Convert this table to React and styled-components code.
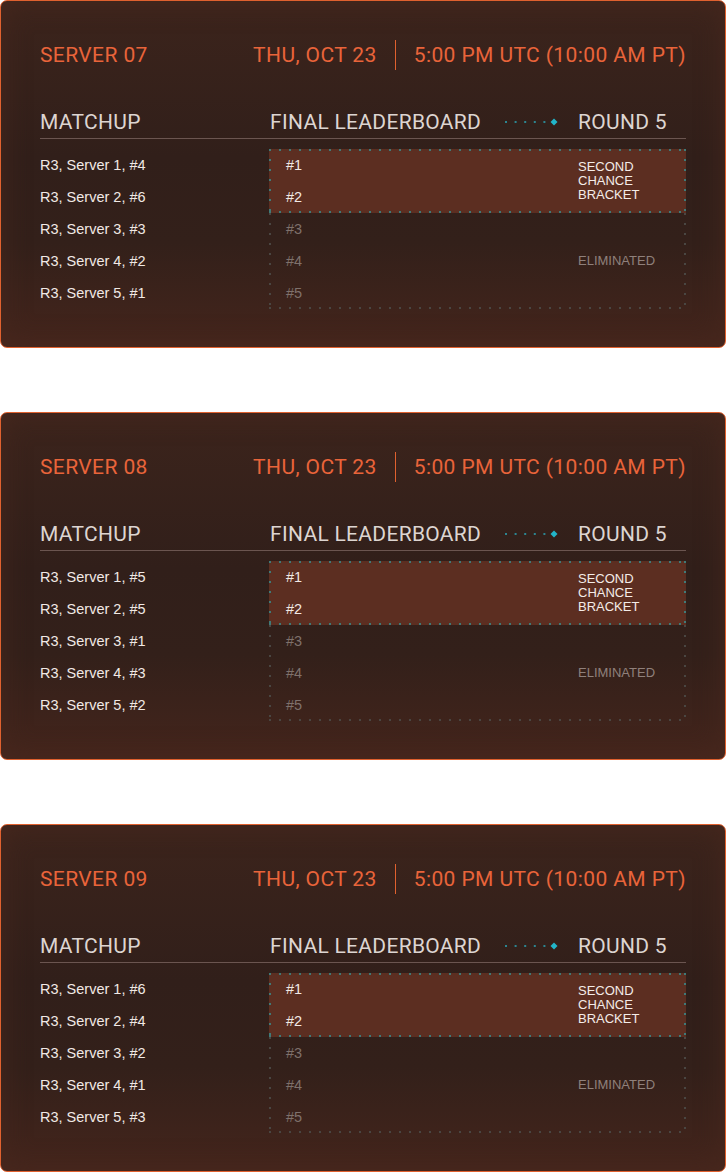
import React from "react";
import styled, { createGlobalStyle } from "styled-components";

const GlobalStyle = createGlobalStyle`
  body {
    margin: 0;
    background: #ffffff;
    font-family: "Liberation Sans", Arial, sans-serif;
  }
`;

const servers = [
  { id: "07", seeds: ["#4", "#6", "#3", "#2", "#1"] },
  { id: "08", seeds: ["#5", "#5", "#1", "#3", "#2"] },
  { id: "09", seeds: ["#6", "#4", "#2", "#1", "#3"] },
];

const Page = styled.div`
  display: flex;
  flex-direction: column;
  gap: 64px;
  width: 726px;
`;

const Card = styled.section`
  box-sizing: border-box;
  height: 348px;
  padding: 39px 39px 0 39px;
  border: 1px solid #e0612f;
  border-radius: 7px;
  background: linear-gradient(180deg, #3c241c 0%, #311f1a 45%, #33201a 70%, #44251c 100%);
  box-shadow: inset 0 0 28px rgba(72, 40, 30, 0.9);
`;

const Title = styled.div`
  display: flex;
  align-items: center;
  justify-content: space-between;
  height: 30px;
  font-family: Roboto, "Liberation Sans", sans-serif;
  font-size: 21px;
  letter-spacing: 0.4px;
  color: #e9643a;
`;

const When = styled.div`
  display: flex;
  align-items: center;
  gap: 18px;
`;

const Divider = styled.span`
  width: 1px;
  height: 30px;
  background: #e0612f;
`;

const Head = styled.div`
  display: grid;
  grid-template-columns: 230px 308px 1fr;
  align-items: center;
  margin-top: 37px;
  height: 29px;
  border-bottom: 1px solid #6b5550;
  font-family: Roboto, "Liberation Sans", sans-serif;
  font-size: 21px;
  letter-spacing: 0.3px;
  color: #ddd5d1;
  padding-bottom: 2px;
`;

const HeadCell = styled.div`
  display: flex;
  align-items: center;
`;

const Trail = styled.svg`
  margin-left: 24px;
`;

const Body = styled.div`
  display: grid;
  grid-template-columns: 229px 1fr;
  margin-top: 10px;
`;

const Matchups = styled.div`
  display: flex;
  flex-direction: column;
`;

const Row = styled.div`
  height: 32px;
  display: flex;
  align-items: center;
  font-size: 14.5px;
  color: ${(p) => p.$tone || "#f1e9e5"};
`;

const dots = (c) => `
  linear-gradient(to right, ${c} 2px, transparent 2px),
  linear-gradient(to right, ${c} 2px, transparent 2px),
  linear-gradient(to bottom, ${c} 2px, transparent 2px),
  linear-gradient(to bottom, ${c} 2px, transparent 2px)
`;

const Group = styled.div`
  display: grid;
  grid-template-columns: 309px 1fr;
  align-items: center;
  background-color: ${(p) => (p.$hot ? "#5c2e21" : "transparent")};
  background-image: ${(p) => dots(p.$hot ? "#3f7a78" : "#4a4642")};
  background-size: 10px 2px, 10px 2px, 2px 10px, 2px 10px;
  background-position: ${(p) =>
    p.$hot ? "0 0, 0 100%, 0 0, 100% 0" : "0 -4px, 0 100%, 0 0, 100% 0"};
  background-repeat: repeat-x, repeat-x, repeat-y, repeat-y;
`;

const Ranks = styled.div`
  display: flex;
  flex-direction: column;
  padding-left: 17px;
`;

const Label = styled.div`
  font-size: 13px;
  line-height: 14px;
  color: ${(p) => (p.$hot ? "#f4ece8" : "#8f807b")};
`;

function ServerCard({ id, seeds }) {
  return (
    <Card>
      <Title>
        <span>SERVER {id}</span>
        <When>
          <span>THU, OCT 23</span>
          <Divider />
          <span>5:00 PM UTC (10:00 AM PT)</span>
        </When>
      </Title>
      <Head>
        <HeadCell>MATCHUP</HeadCell>
        <HeadCell>
          FINAL LEADERBOARD
          <Trail width="54" height="8" viewBox="0 0 54 8">
            {[0, 9.6, 19.2, 28.8, 38.4].map((x) => (
              <rect key={x} x={x} y="3" width="2" height="2" fill="#2c8590" />
            ))}
            <path d="M49 0.5 L52.5 4 L49 7.5 L45.5 4 Z" fill="#22b5c9" />
          </Trail>
        </HeadCell>
        <HeadCell>ROUND 5</HeadCell>
      </Head>
      <Body>
        <Matchups>
          {seeds.map((s, i) => (
            <Row key={i}>R3, Server {i + 1}, {s}</Row>
          ))}
        </Matchups>
        <div>
          <Group $hot>
            <Ranks>
              <Row>#1</Row>
              <Row>#2</Row>
            </Ranks>
            <Label $hot>
              SECOND
              <br />
              CHANCE
              <br />
              BRACKET
            </Label>
          </Group>
          <Group>
            <Ranks>
              <Row $tone="#7f716c">#3</Row>
              <Row $tone="#7f716c">#4</Row>
              <Row $tone="#7f716c">#5</Row>
            </Ranks>
            <Label>ELIMINATED</Label>
          </Group>
        </div>
      </Body>
    </Card>
  );
}

export default function App() {
  return (
    <>
      <GlobalStyle />
      <Page>
        {servers.map((s) => (
          <ServerCard key={s.id} {...s} />
        ))}
      </Page>
    </>
  );
}
